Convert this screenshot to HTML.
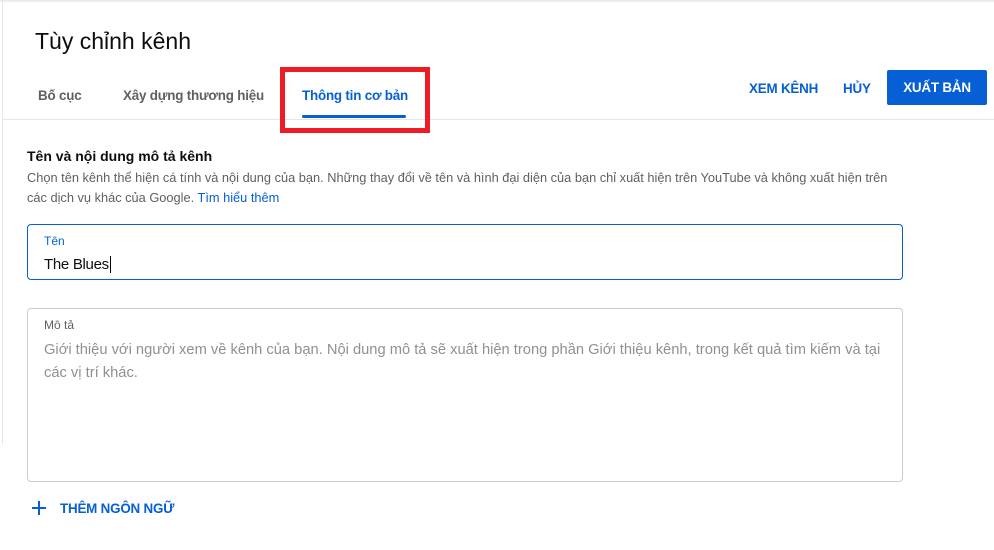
<!DOCTYPE html>
<html><head><meta charset="utf-8"><style>
*{margin:0;padding:0;box-sizing:border-box}
body{width:994px;height:550px;background:#fff;font-family:"Liberation Sans","Noto Sans CJK SC",sans-serif;position:relative;overflow:hidden;color:#0d0d0d}
.a{position:absolute;white-space:nowrap}
.m{font-size:13.4px;font-weight:bold;letter-spacing:-0.2px}
</style></head><body>
<div class="a" style="left:0;top:0;width:994px;height:3px;background:linear-gradient(#e4e4e4,#fff)"></div>
<div class="a" style="left:2px;top:0;width:1px;height:445px;background:#e6e6e6"></div>
<div class="a" style="left:35px;top:28px;font-size:23px;color:#0d0d0d">Tùy chỉnh kênh</div>
<div class="a m" style="left:38px;top:88px;color:#606060">Bố cục</div>
<div class="a m" style="left:123px;top:88px;color:#606060">Xây dựng thương hiệu</div>
<div class="a m" style="left:302px;top:88px;color:#065fd4">Thông tin cơ bản</div>
<div class="a" style="left:302px;top:115px;width:104px;height:3px;background:#065fd4;border-radius:2px"></div>
<div class="a" style="left:3px;top:119px;width:991px;height:1px;background:#e5e5e5"></div>
<div class="a" style="left:280px;top:67px;width:150px;height:66px;border:5px solid #ed1c24"></div>
<div class="a m" style="left:749px;top:81px;color:#065fd4">XEM KÊNH</div>
<div class="a m" style="left:843px;top:81px;color:#065fd4">HỦY</div>
<div class="a m" style="left:887px;top:70px;width:100px;height:35px;background:#065fd4;border-radius:2px;color:#fff;text-align:center;line-height:35px">XUẤT BẢN</div>
<div class="a" style="left:27px;top:148px;font-size:14px;font-weight:bold;color:#0d0d0d">Tên và nội dung mô tả kênh</div>
<div class="a" style="left:27px;top:168px;font-size:12.8px;color:#606060;line-height:20px">Chọn tên kênh thể hiện cá tính và nội dung của bạn. Những thay đổi về tên và hình đại diện của bạn chỉ xuất hiện trên YouTube và không xuất hiện trên<br>các dịch vụ khác của Google. <span style="color:#065fd4">Tìm hiểu thêm</span></div>
<div class="a" style="left:27px;top:224px;width:876px;height:56px;border:1px solid #065fd4;border-radius:4px"></div>
<div class="a" style="left:44px;top:234px;font-size:12px;color:#065fd4">Tên</div>
<div class="a" style="left:44px;top:256px;font-size:15px;color:#0d0d0d;letter-spacing:-0.3px">The Blues<span style="border-left:1px solid #000;margin-left:1px"></span></div>
<div class="a" style="left:27px;top:308px;width:876px;height:174px;border:1px solid #ccc;border-radius:4px"></div>
<div class="a" style="left:44px;top:318px;font-size:12px;color:#606060">Mô tả</div>
<div class="a" style="left:44px;top:339px;font-size:14.7px;color:#909090;line-height:23px">Giới thiệu với người xem về kênh của bạn. Nội dung mô tả sẽ xuất hiện trong phần Giới thiệu kênh, trong kết quả tìm kiếm và tại<br>các vị trí khác.</div>
<svg class="a" style="left:31px;top:500px" width="16" height="16"><path d="M8 1v14M1 8h14" stroke="#065fd4" stroke-width="2"/></svg>
<div class="a m" style="left:60px;top:501px;color:#065fd4">THÊM NGÔN NGỮ</div>
</body></html>
